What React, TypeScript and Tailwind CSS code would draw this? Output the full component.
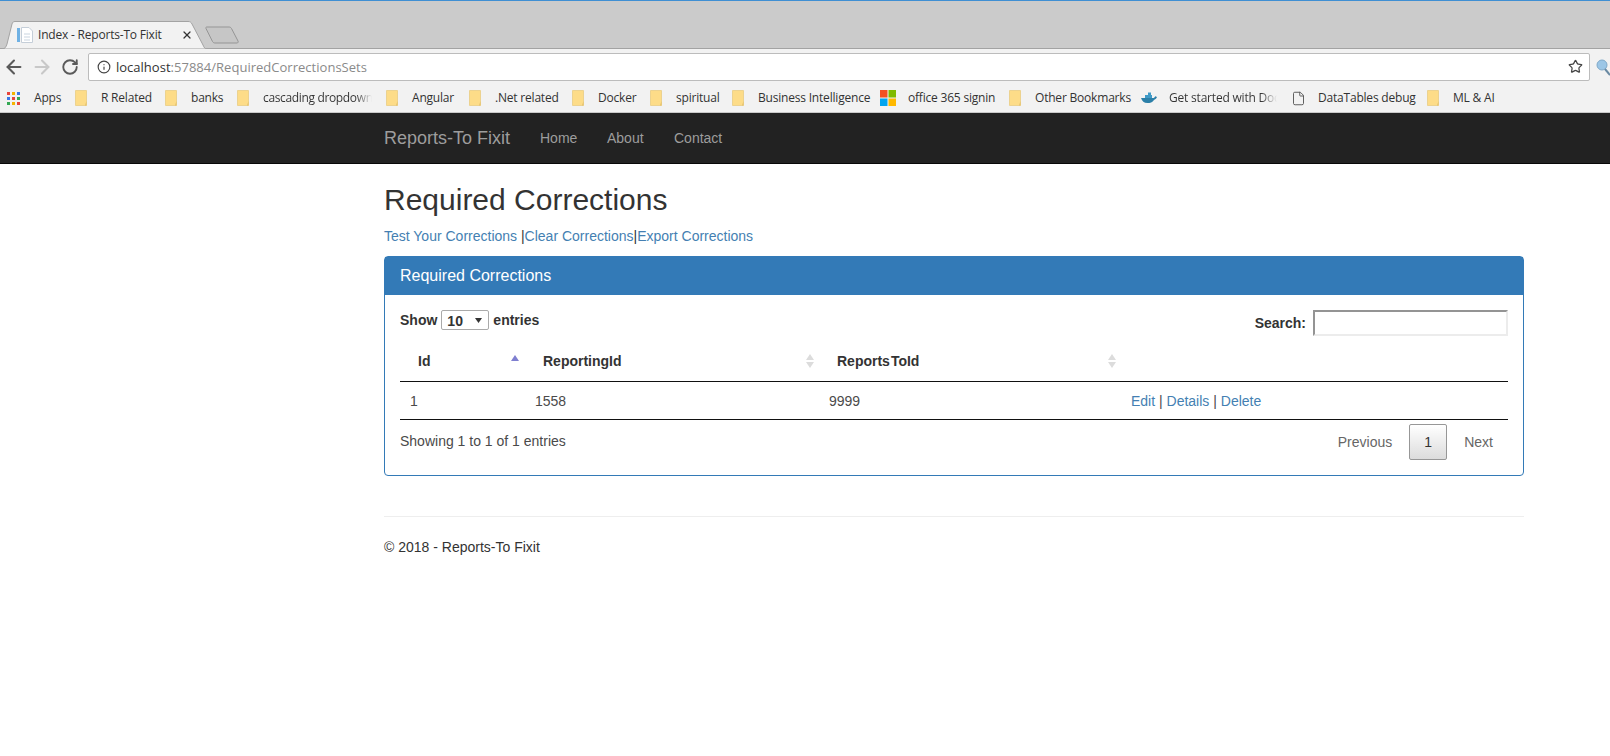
import { ArrowLeft, ArrowRight, File, Info, RotateCw, Star, X } from "lucide-react";

function FolderIcon() {
  return (
    <svg width="12" height="16" viewBox="0 0 12 16" className="shrink-0">
      <path d="M0.5 0.5H11.5V15.5H0.5Z" fill="#fddc88" stroke="#ecd28f" />
      <path d="M10 15.5L11.5 11V15.5Z" fill="#e3c06a" />
    </svg>
  );
}

function AppsIcon() {
  const colors = ["#e8453c", "#f4b400", "#3b78e7", "#3b78e7", "#e8453c", "#34a853", "#34a853", "#f4b400", "#e8453c"];
  return (
    <svg width="13" height="13" viewBox="0 0 13 13" className="shrink-0">
      {colors.map((c, i) => (
        <rect key={i} x={(i % 3) * 5} y={Math.floor(i / 3) * 5} width="3" height="3" fill={c} />
      ))}
    </svg>
  );
}

function MsIcon() {
  return (
    <svg width="16" height="16" viewBox="0 0 16 16" className="shrink-0">
      <rect width="7.5" height="7.5" fill="#f25022" />
      <rect x="8.5" width="7.5" height="7.5" fill="#7fba00" />
      <rect y="8.5" width="7.5" height="7.5" fill="#00a4ef" />
      <rect x="8.5" y="8.5" width="7.5" height="7.5" fill="#ffb900" />
    </svg>
  );
}

function DockerIcon() {
  return (
    <svg width="16" height="12" viewBox="0 0 16 12" className="shrink-0">
      <path d="M0 6H12C13 6 14 5 14.2 4.2L16 5C15.2 7 14 7.5 13 8C11.5 10.5 9 11 6.5 11C3 11 1 9 0 6Z" fill="#2b7fa8" />
      <path d="M4 3H11V6H4ZM7 0.5H10V3H7Z" fill="#3f9ac7" />
    </svg>
  );
}

function SortArrows({ active }: { active?: boolean }) {
  if (active) {
    return (
      <svg width="8" height="6" viewBox="0 0 8 6" className="shrink-0 mb-[6px]">
        <path d="M4 0L8 6H0Z" fill="#7f7fd0" />
      </svg>
    );
  }
  return (
    <svg width="8" height="14" viewBox="0 0 8 14" className="shrink-0">
      <path d="M4 0L8 6H0Z" fill="#dcdcdc" />
      <path d="M4 14L0 8H8Z" fill="#dcdcdc" />
    </svg>
  );
}

const fadeText = "overflow-hidden bg-gradient-to-r from-[#333] from-[85%] to-transparent bg-clip-text text-transparent";

const bookmarks = [
  { label: "R Related", width: "w-[50px]" },
  { label: "banks", width: "w-[32px]" },
  { label: "cascading dropdown", width: "w-[109px] tracking-[-0.35px]", fade: true },
  { label: "Angular", width: "w-[43px]" },
  { label: ".Net related", width: "w-[63px]" },
  { label: "Docker", width: "w-[38px]" },
  { label: "spiritual", width: "w-[42px]" },
  { label: "Business Intelligence", width: "w-[108px]" },
];

export default function App() {
  return (
    <div className="min-h-screen bg-white font-['Liberation_Sans',Arial,sans-serif] text-[14px] leading-[20px] text-[#333]">
      {/* Browser chrome */}
      <div className="font-['Open_Sans',sans-serif] text-[#333]">
        <div className="h-[1px] bg-[#3f8fd3]" />
        <div className="h-[48px] bg-[#cbcbcb] border-b border-[#a3a3a3] flex items-end pl-[2px]">
          <div className="relative w-[205px] h-[28px] -mb-[1px] flex items-center">
            <svg width="205" height="28" viewBox="0 0 205 28" className="absolute inset-0">
              <path d="M0 28C3 28 4 26 5 23L10 3C10.6 1 11.5 0.5 13 0.5H186C188 0.5 189 1 190 3L201 24C202 26.5 203 28 205 28Z" fill="#f2f2f2" stroke="#a3a3a3" />
            </svg>
            <svg width="16" height="16" viewBox="0 0 16 16" className="relative ml-[15px] shrink-0">
              <rect x="0" y="1" width="3" height="14" fill="#6fb1e4" />
              <path d="M4.5 0.5H12L15.5 4V15.5H4.5Z" fill="#fff" stroke="#c5ced8" />
              <path d="M7 7H13M7 10H13M7 13H13" stroke="#c9d4df" />
            </svg>
            <span className="relative ml-[5px] w-[124px] text-[12px] tracking-[-0.2px] whitespace-nowrap">Index - Reports-To Fixit</span>
            <X size={12} strokeWidth={2.5} className="relative ml-[19px] text-[#333]" />
          </div>
          <svg width="36" height="18" viewBox="0 0 36 18" className="-ml-[2px] mb-[4px]">
            <path d="M2 1H24C25 1 26 1.5 26.5 2.5L33 15C33.5 16 33 17 32 17H10C9 17 8 16.5 7.5 15.5L1 2.5C0.5 1.5 1 1 2 1Z" fill="#c6c6c6" stroke="#959595" />
          </svg>
        </div>

        <div className="h-[35px] bg-[#f2f2f2] flex items-center pl-[3px]">
          <ArrowLeft size={22} strokeWidth={2.25} className="text-[#5a5a5a]" />
          <ArrowRight size={22} strokeWidth={2.25} className="ml-[6px] text-[#c8c8c8]" />
          <RotateCw size={18} strokeWidth={2.5} className="ml-[8px] text-[#5a5a5a]" />
          <div className="ml-[9px] w-[1504px] h-[28px] bg-white border border-[#bcbcbc] rounded-[2px] flex items-center pl-[8px] pr-[6px]">
            <Info size={14} strokeWidth={2} className="text-[#444] shrink-0" />
            <span className="ml-[5px] text-[13px] tracking-[0.02px] whitespace-nowrap text-[#8a8a8a]">
              <span className="text-[#333]">localhost</span>:57884/RequiredCorrectionsSets
            </span>
            <Star size={15} strokeWidth={2} className="ml-auto text-[#444]" />
          </div>
          <svg width="14" height="18" viewBox="0 0 14 18" className="ml-[6px] shrink-0">
            <circle cx="6" cy="7" r="5" fill="#9cc6e6" stroke="#7fa9c9" />
            <path d="M9 11L14 17" stroke="#6a8aa3" strokeWidth="2" />
          </svg>
        </div>

        <div className="h-[29px] bg-[#f2f2f2] border-b border-[#c9c9c9] flex items-center pl-[7px] gap-[14px] text-[12px] whitespace-nowrap tracking-[-0.2px]">
          <div className="flex items-center gap-[14px]">
            <AppsIcon />
            <span className="w-[27px]">Apps</span>
          </div>
          {bookmarks.map((b) => (
            <div key={b.label} className="flex items-center gap-[14px]">
              <FolderIcon />
              <span className={b.fade ? `${b.width} ${fadeText}` : b.width}>{b.label}</span>
            </div>
          ))}
          <div className="flex items-center gap-[12px]">
            <MsIcon />
            <span className="w-[86px]">office 365 signin</span>
          </div>
          <div className="flex items-center gap-[14px] ml-[1px]">
            <FolderIcon />
            <span className="w-[92px]">Other Bookmarks</span>
          </div>
          <div className="flex items-center gap-[12px]">
            <DockerIcon />
            <span className={`w-[108px] ${fadeText}`}>Get started with Doc</span>
          </div>
          <div className="flex items-center gap-[12px]">
            <File size={15} strokeWidth={1.5} className="text-[#555]" />
            <span className="w-[95px]">DataTables debug</span>
          </div>
          <div className="flex items-center gap-[14px]">
            <FolderIcon />
            <span>ML &amp; AI</span>
          </div>
        </div>
      </div>

      {/* Navbar */}
      <nav className="h-[51px] bg-[#222] border-b border-[#080808] pl-[384px] flex items-center text-[#9d9d9d]">
        <span className="text-[18px] w-[156px]">Reports-To Fixit</span>
        <span className="w-[67px]">Home</span>
        <span className="w-[67px]">About</span>
        <span>Contact</span>
      </nav>

      <main className="ml-[384px] w-[1140px]">
        <h1 className="text-[30px] leading-[40px] mt-[16px] mb-[6px]">Required Corrections</h1>
        <p className="mb-[10px] text-[#447fb2]">
          <a>Test Your Corrections</a> <span className="text-[#333]">|</span><a>Clear Corrections</a><span className="text-[#333]">|</span><a>Export Corrections</a>
        </p>

        <section className="h-[220px] border border-[#337ab7] rounded-[4px]">
          <div className="h-[38px] bg-[#337ab7] text-white text-[16px] px-[15px] flex items-center">Required Corrections</div>
          <div className="px-[15px] pt-[15px]">
            <div className="h-[26px] flex justify-between items-start mb-[5px] font-bold">
              <div className="flex items-center h-[20px]">
                Show
                <div className="relative mx-[4px]">
                  <select className="block appearance-none w-[48px] h-[20px] border border-[#aaa] rounded-[2px] bg-white pl-[5px] text-[14px] font-bold">
                    <option>10</option>
                  </select>
                  <svg width="7" height="5" viewBox="0 0 7 5" className="absolute right-[7px] top-[8px]">
                    <path d="M0 0H7L3.5 5Z" fill="#333" />
                  </svg>
                </div>
                entries
              </div>
              <label className="flex items-center h-[26px]">
                Search:
                <input className="ml-[7px] w-[195px] h-[26px] bg-white border-2 border-t-[#949494] border-l-[#949494] border-r-[#ececec] border-b-[#ececec]" />
              </label>
            </div>

            <table className="w-[1108px] table-fixed border-collapse">
              <thead>
                <tr className="h-[40px] border-b border-[#111] font-bold">
                  <th className="w-[125px] pl-[18px] pr-[6px] text-left">
                    <div className="flex items-center justify-between">Id<SortArrows active /></div>
                  </th>
                  <th className="w-[294px] pl-[18px] pr-[5px] text-left">
                    <div className="flex items-center justify-between">ReportingId<SortArrows /></div>
                  </th>
                  <th className="w-[302px] pl-[18px] pr-[5px] text-left">
                    <div className="flex items-center justify-between"><span>Reports<span className="ml-[1px]">ToId</span></span><SortArrows /></div>
                  </th>
                  <th />
                </tr>
              </thead>
              <tbody>
                <tr className="h-[38px] border-b border-[#111] text-[#4a4a4a]">
                  <td className="pl-[10px] pt-[2px]">1</td>
                  <td className="pl-[10px] pt-[2px]">1558</td>
                  <td className="pl-[10px] pt-[2px]">9999</td>
                  <td className="pl-[10px] pt-[2px]">
                    <a className="text-[#447fb2]">Edit</a> | <a className="text-[#447fb2]">Details</a> | <a className="text-[#447fb2]">Delete</a>
                  </td>
                </tr>
              </tbody>
            </table>

            <div className="flex justify-between pt-[4px]">
              <div className="pt-[7px] text-[#4a4a4a]">Showing 1 to 1 of 1 entries</div>
              <div className="flex items-center h-[36px] text-[#666]">
                <span className="mr-[17px]">Previous</span>
                <span className="w-[38px] h-[36px] flex items-center justify-center text-[#333] border border-[#979797] rounded-[2px] bg-gradient-to-b from-white to-[#dcdcdc]">1</span>
                <span className="ml-[17px] mr-[15px]">Next</span>
              </div>
            </div>
          </div>
        </section>

        <hr className="mt-[40px] border-[#eee]" />
        <p className="mt-[20px]">© 2018 - Reports-To Fixit</p>
      </main>
    </div>
  );
}
